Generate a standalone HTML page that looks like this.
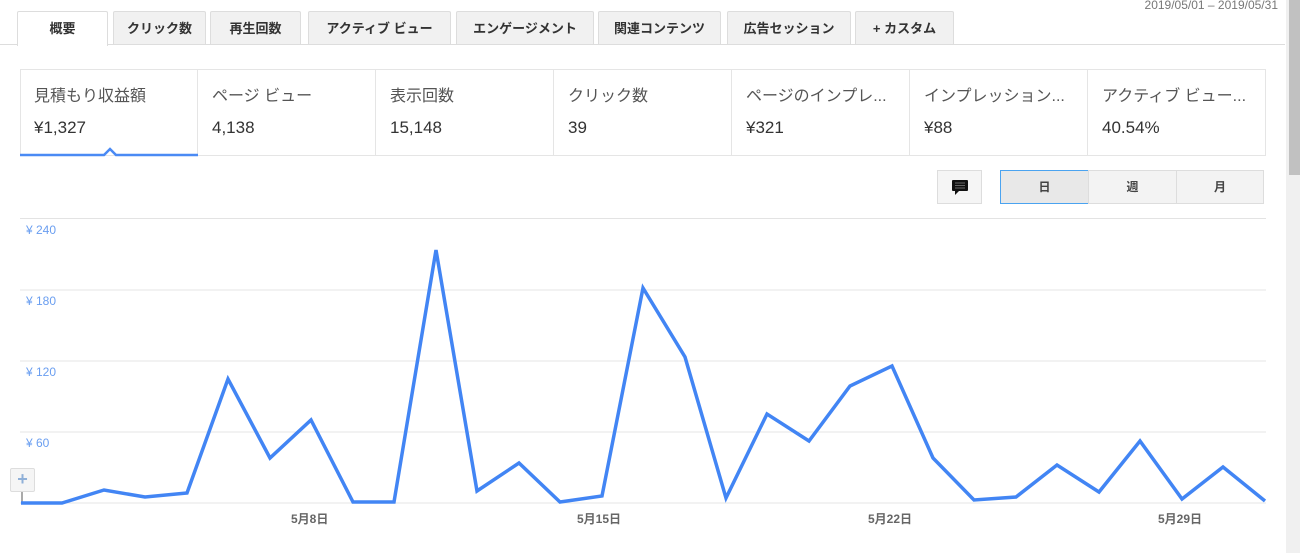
<!DOCTYPE html>
<html><head><meta charset="utf-8"><style>
body{margin:0;width:1300px;height:553px;background:#fff;font-family:"Liberation Sans","Noto Sans CJK JP",sans-serif;position:relative;overflow:hidden;color:#333}
.abs{position:absolute}
.tab{position:absolute;top:11px;height:33px;background:#f1f1f1;border:1px solid #ddd;border-bottom:none;border-radius:2px 2px 0 0;font-size:13px;font-weight:bold;color:#333;text-align:center;line-height:33px;box-sizing:border-box}
.tab.act{background:#fff;height:35px}
.card{position:absolute;top:69px;height:87px;border-right:1px solid #e5e5e5;box-sizing:border-box;padding-left:14px}
.card .l{font-size:16px;line-height:20px;color:#555;margin-top:18px;white-space:nowrap}
.card .v{font-size:17px;line-height:20px;color:#333;margin-top:11px}
.btn{position:absolute;top:170px;height:34px;background:#f3f3f3;border:1px solid #ddd;box-sizing:border-box;text-align:center;line-height:32px;font-size:12px;font-weight:bold;color:#444}
.yl{position:absolute;left:26px;font-size:12px;color:#6a9ef0}
.xl{position:absolute;top:510px;font-size:12px;font-weight:bold;color:#666}
</style></head><body>
<div class="abs" style="right:22px;top:-2px;font-size:12px;color:#777">2019/05/01 – 2019/05/31</div>
<div class="abs" style="left:0;top:44px;width:1285px;height:1px;background:#ddd"></div>
<div class="tab act" style="left:17px;width:91px">概要</div>
<div class="tab" style="left:113px;width:93px">クリック数</div>
<div class="tab" style="left:210px;width:91px">再生回数</div>
<div class="tab" style="left:308px;width:143px">アクティブ ビュー</div>
<div class="tab" style="left:456px;width:138px">エンゲージメント</div>
<div class="tab" style="left:598px;width:123px">関連コンテンツ</div>
<div class="tab" style="left:727px;width:124px">広告セッション</div>
<div class="tab" style="left:855px;width:99px">+ カスタム</div>
<div class="abs" style="left:20px;top:69px;width:1246px;height:87px;border:1px solid #e5e5e5;box-sizing:border-box"></div>
<div class="card" style="left:20px;width:178px"><div class="l">見積もり収益額</div><div class="v">¥1,327</div></div>
<div class="card" style="left:198px;width:178px"><div class="l">ページ ビュー</div><div class="v">4,138</div></div>
<div class="card" style="left:376px;width:178px"><div class="l">表示回数</div><div class="v">15,148</div></div>
<div class="card" style="left:554px;width:178px"><div class="l">クリック数</div><div class="v">39</div></div>
<div class="card" style="left:732px;width:178px"><div class="l">ページのインプレ...</div><div class="v">¥321</div></div>
<div class="card" style="left:910px;width:178px"><div class="l">インプレッション...</div><div class="v">¥88</div></div>
<div class="card" style="left:1088px;width:178px;border:none"><div class="l">アクティブ ビュー...</div><div class="v">40.54%</div></div>
<svg class="abs" style="left:0;top:145px" width="200" height="15"><polyline points="20,10 104,10 110,4 116,10 198,10" fill="none" stroke="#4a8af4" stroke-width="2.5"/></svg>
<div class="btn" style="left:937px;width:45px;background:#f5f5f5"><svg width="20" height="20" style="margin-top:7px"><path d="M3 2h14a1 1 0 0 1 1 1v9a1 1 0 0 1-1 1H9l-4 4v-4H3a1 1 0 0 1-1-1V3a1 1 0 0 1 1-1z" fill="#111"/><path d="M5 5h10M5 7.5h10M5 10h10" stroke="#666" stroke-width="1"/></svg></div>
<div class="btn" style="left:1000px;width:89px;background:#e8e8e8;border:1px solid #4aa3f0">日</div>
<div class="btn" style="left:1088px;width:89px">週</div>
<div class="btn" style="left:1176px;width:88px">月</div>
<div class="abs" style="left:20px;top:218px;width:1246px;height:1px;background:#e3e3e3"></div>
<svg class="abs" style="left:0;top:0" width="1300" height="553">
<g stroke="#e6e6e6" stroke-width="1"><line x1="20" y1="290" x2="1266" y2="290"/><line x1="20" y1="361" x2="1266" y2="361"/><line x1="20" y1="432" x2="1266" y2="432"/><line x1="20" y1="503" x2="1266" y2="503"/></g>
<line x1="22" y1="490" x2="22" y2="503" stroke="#555" stroke-width="1"/>
<polyline fill="none" stroke="#4285f4" stroke-width="3.5" stroke-linejoin="miter" points="21,503 62,503 104,490 145,497 187,493 228,379 270,458 311,420 353,502 394,502 436,250 477,491 519,463 560,502 602,496 643,288 685,357 726,498 767,414 809,441 850,386 892,366 933,458 974,500 1016,497 1057,465 1099,492 1140,441 1182,499 1223,467 1265,501"/>
</svg>
<div class="yl" style="top:223px">¥ 240</div>
<div class="yl" style="top:294px">¥ 180</div>
<div class="yl" style="top:365px">¥ 120</div>
<div class="yl" style="top:436px">¥ 60</div>
<div class="abs" style="left:10px;top:468px;width:23px;height:22px;border:1px solid #ddd;background:#f5f5f5;border-radius:2px;color:#8fb0d8;font-size:18px;font-weight:bold;text-align:center;line-height:21px">+</div>
<div class="xl" style="left:291px">5月8日</div>
<div class="xl" style="left:577px">5月15日</div>
<div class="xl" style="left:868px">5月22日</div>
<div class="xl" style="left:1158px">5月29日</div>
<div class="abs" style="left:1286px;top:0;width:14px;height:553px;background:#f0f0f0"></div>
<div class="abs" style="left:1289px;top:0;width:11px;height:175px;background:#c1c1c1"></div>
</body></html>
